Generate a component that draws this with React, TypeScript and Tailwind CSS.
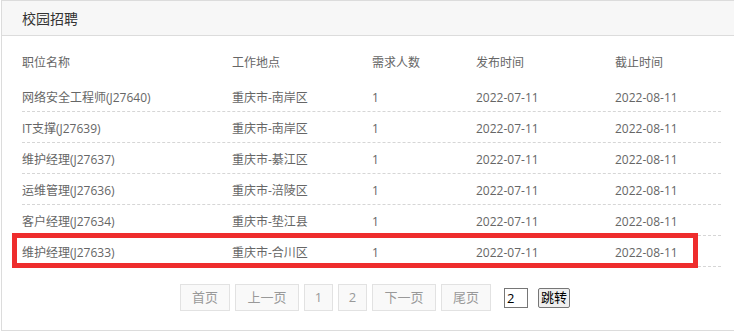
const rows = [
  { name: "网络安全工程师(J27640)", place: "重庆市-南岸区" },
  { name: "IT支撑(J27639)", place: "重庆市-南岸区" },
  { name: "维护经理(J27637)", place: "重庆市-綦江区" },
  { name: "运维管理(J27636)", place: "重庆市-涪陵区" },
  { name: "客户经理(J27634)", place: "重庆市-垫江县" },
  { name: "维护经理(J27633)", place: "重庆市-合川区" },
]

const cols = "grid grid-cols-[210px_140px_104px_139px_1fr]"

export default function App() {
  return (
    <div
      className="relative h-[333px] w-[734px] bg-white text-[12px] text-[#666]"
      style={{ fontFamily: '"Open Sans", "Noto Sans CJK SC", sans-serif' }}
    >
      <div className="ml-px h-[331px] border-b border-l border-t border-[#dcdcdc]">
        {/* Title bar */}
        <div className="flex h-[35px] items-center border-b border-[#dcdcdc] bg-[#f7f7f7] pl-[20px] pt-[1px] text-[14px] text-[#333]">
          校园招聘
        </div>

        {/* Table */}
        <div className="ml-[20px] mr-[13px] mt-[9px]">
          <div className={`${cols} h-[32px] items-center pt-[3px]`}>
            <span>职位名称</span>
            <span>工作地点</span>
            <span>需求人数</span>
            <span>发布时间</span>
            <span>截止时间</span>
          </div>
          <div className="mt-[4px]">
            {rows.map((r) => (
              <div
                key={r.name}
                className={`${cols} h-[31px] items-center border-b border-dashed border-[#d6d6d6] pt-[3px]`}
              >
                <span>{r.name}</span>
                <span>{r.place}</span>
                <span>1</span>
                <span>2022-07-11</span>
                <span>2022-08-11</span>
              </div>
            ))}
          </div>
        </div>

        {/* Pagination */}
        <div className="mt-[17px] flex items-center pl-[178px] text-[13px] text-[#999]">
          <div className="flex gap-[5px]">
            {["首页", "上一页", "1", "2", "下一页", "尾页"].map((p) => (
              <span
                key={p}
                className={`flex h-[27px] items-center justify-center border border-[#e2e2e2] bg-[#f9f9f9] pt-[1px] ${
                  p.length === 1 ? "w-[29px]" : p.length === 2 ? "w-[50px]" : "w-[64px]"
                }`}
              >
                {p}
              </span>
            ))}
          </div>
          <input
            defaultValue="2"
            className="ml-[13px] h-[20px] w-[24px] border border-[#767676] bg-white px-[2px] text-[13px] text-black outline-none"
          />
          <button className="ml-[10px] h-[20px] rounded-[2px] border border-[#767676] bg-[#efefef] px-[2px] text-[13px] leading-none text-black">
            跳转
          </button>
        </div>
      </div>

      {/* highlight box */}
      <div className="absolute left-[12px] top-[233px] h-[35px] w-[686px] border-[5px] border-[#ee2d2d]" />
    </div>
  )
}
